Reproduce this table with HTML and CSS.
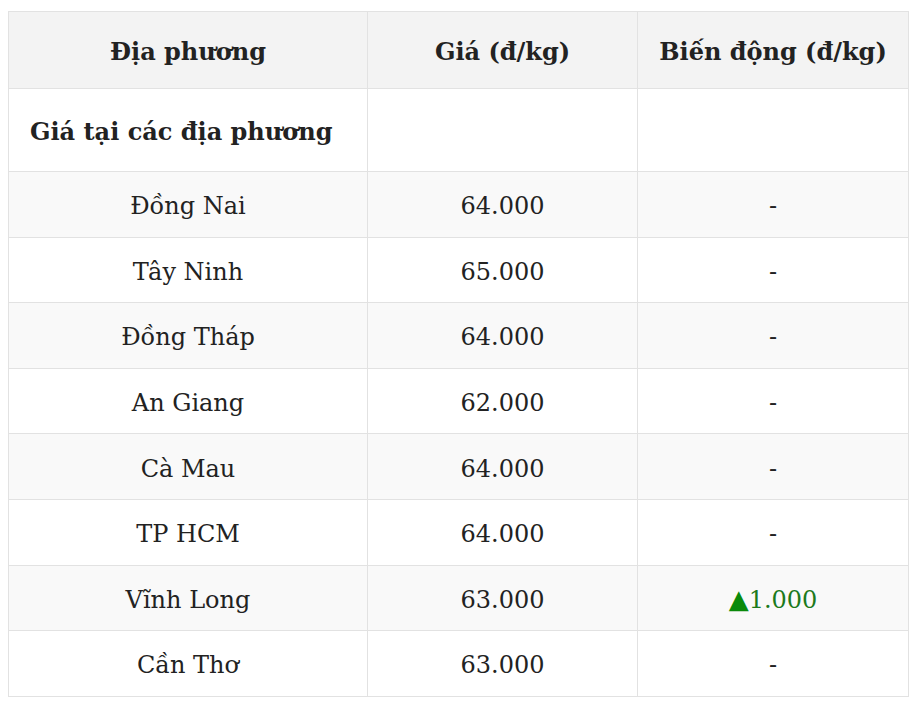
FILE: index.html
```html
<!DOCTYPE html>
<html lang="vi">
<head>
<meta charset="utf-8">
<link rel="stylesheet" href="styles.css">
</head>
<body>
<table class="price-table">
  <colgroup>
    <col class="col-a"><col class="col-b"><col class="col-c">
  </colgroup>
  <thead>
    <tr class="head-row"><th>Địa phương</th><th>Giá (đ/kg)</th><th>Biến động (đ/kg)</th></tr>
  </thead>
  <tbody>
    <tr class="section-row"><td class="section">Giá tại các địa phương</td><td></td><td></td></tr>
    <tr class="alt"><td>Đồng Nai</td><td>64.000</td><td>-</td></tr>
    <tr><td>Tây Ninh</td><td>65.000</td><td>-</td></tr>
    <tr class="alt"><td>Đồng Tháp</td><td>64.000</td><td>-</td></tr>
    <tr><td>An Giang</td><td>62.000</td><td>-</td></tr>
    <tr class="alt"><td>Cà Mau</td><td>64.000</td><td>-</td></tr>
    <tr><td>TP HCM</td><td>64.000</td><td>-</td></tr>
    <tr class="alt"><td>Vĩnh Long</td><td>63.000</td><td class="up"><span class="tri">▲</span>1.000</td></tr>
    <tr><td>Cần Thơ</td><td>63.000</td><td>-</td></tr>
  </tbody>
</table>
</body>
</html>
```

FILE: styles.css
```css
html, body {
  margin: 0;
  padding: 0;
  background: #ffffff;
}
body {
  padding: 11px 9px 0 8px;
  font-family: "DejaVu Serif", "Liberation Serif", serif;
  color: #222222;
}
.price-table {
  width: 900px;
  border-collapse: collapse;
  table-layout: fixed;
  border: 1px solid #dedede;
}
.col-a { width: 359px; }
.col-b { width: 270px; }
.col-c { width: 271px; }
.price-table th,
.price-table td {
  border: 1px solid #e2e2e2;
  text-align: center;
  vertical-align: middle;
  padding: 4px 0 0;
  font-size: 24px;
  line-height: 30px;
  height: 60.6px;
}
.head-row th {
  background: #f3f3f3;
  font-weight: bold;
  height: 72px;
  font-size: 24px;
  padding: 4px 0 0;
}
.section-row td { height: 78px; padding: 4px 0 0; }
.price-table td.section {
  text-align: left;
  padding-left: 21px;
  font-weight: bold;
}
.alt td { background: #f9f9f9; }
.up { color: #1c7a1c; }
.tri { color: #0a8a0a; font-size: 26px; }
```
